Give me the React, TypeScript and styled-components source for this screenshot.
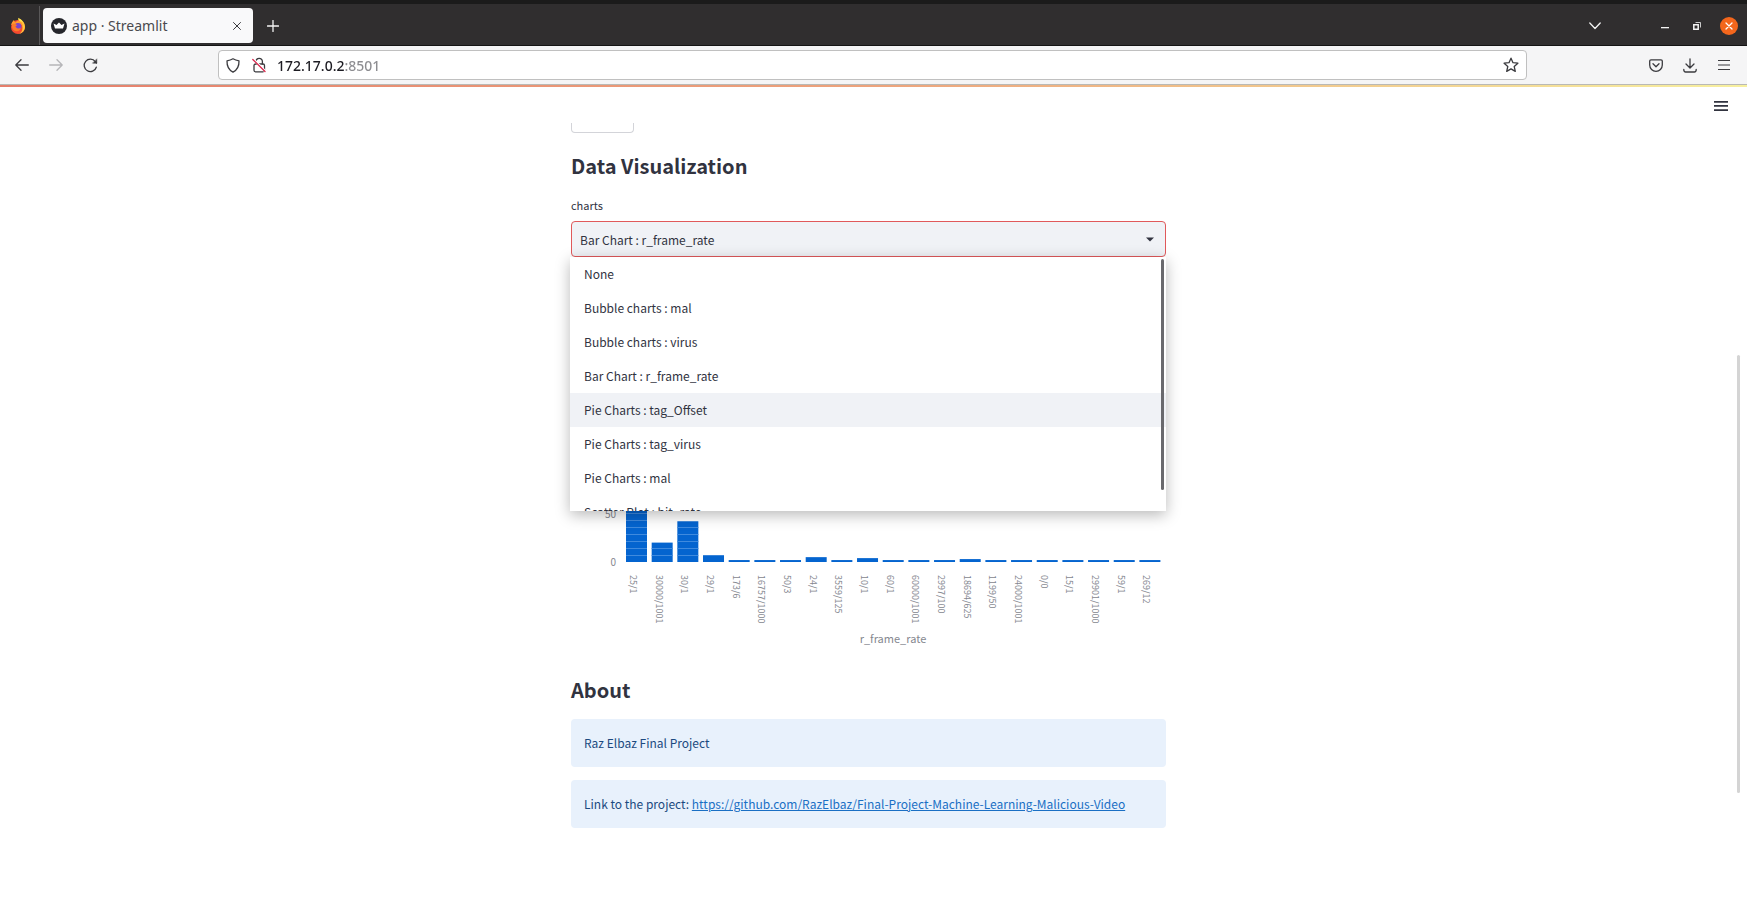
import React, { useState } from "react";
import styled, { createGlobalStyle } from "styled-components";

const sans = `"Noto Sans CJK SC", "Noto Sans", sans-serif`;
const chrome = `"Noto Sans", "Open Sans", sans-serif`;

const GlobalStyle = createGlobalStyle`
  * { box-sizing: border-box; }
  body { margin: 0; background: #ffffff; color: #31333f; font-family: ${sans}; }
  button { font: inherit; }
`;

const Window = styled.div`
  display: flex;
  flex-direction: column;
  height: 100vh;
  overflow: hidden;
`;

const TabStrip = styled.header`
  display: flex;
  align-items: center;
  flex: none;
  height: 46px;
  padding: 2px 9px 0 0;
  border-top: 4px solid #1b1b1b;
  border-bottom: 1px solid #141414;
  background: #302e2f;
  color: #f4f4f4;
  font-family: ${chrome};
`;

const PinnedTab = styled.div`
  display: flex;
  align-items: center;
  align-self: stretch;
  width: 40px;
  padding-left: 9px;
  border-right: 1px solid #5a5859;
`;

const Tab = styled.div`
  display: flex;
  align-items: center;
  gap: 5px;
  width: 210px;
  height: 35px;
  margin-left: 3px;
  padding: 0 8px;
  border-radius: 4px;
  background: #f9f9fa;
  color: #4a4a4e;
  font-size: 14px;
`;

const TabTitle = styled.span`
  flex: 1;
  white-space: nowrap;
`;

const IconButton = styled.button<{ $size?: number; $color?: string }>`
  display: flex;
  align-items: center;
  justify-content: center;
  flex: none;
  width: ${(p) => p.$size ?? 24}px;
  height: ${(p) => p.$size ?? 24}px;
  padding: 0;
  border: 0;
  border-radius: 50%;
  background: none;
  color: ${(p) => p.$color ?? "#3b3b3f"};
`;

const CloseWindow = styled(IconButton)`
  background: #f3661c;
`;

const NewTab = styled(IconButton)`
  margin-left: 8px;
`;

const WindowControls = styled.div`
  display: flex;
  align-items: center;
  gap: 14px;
  margin-left: auto;
`;

const ListTabs = styled(IconButton)`
  margin-right: 35px;
`;

const Toolbar = styled.nav`
  display: flex;
  align-items: center;
  flex: none;
  height: 39px;
  padding: 0 11px 0 10px;
  border-bottom: 1px solid #b9b9b5;
  background: #f5f5f6;
  font-family: ${chrome};
`;

const NavButtons = styled.div`
  display: flex;
  gap: 10px;
  width: 208px;
`;

const AddressBar = styled.div`
  display: flex;
  align-items: center;
  gap: 2px;
  flex: 1;
  height: 30px;
  padding: 0 3px 0 2px;
  border: 1px solid #c0c0c0;
  border-radius: 4px;
  background: #ffffff;
`;

const Address = styled.input`
  flex: 1;
  min-width: 0;
  height: 24px;
  padding: 0 0 0 4px;
  border: 0;
  outline: 0;
  background: linear-gradient(90deg, #1c1b22 72px, #8c8c90 72px);
  background-clip: text;
  color: transparent;
  font: 500 14px ${chrome};
`;

const ToolButtons = styled.div`
  display: flex;
  gap: 10px;
  width: 209px;
  justify-content: flex-end;
`;

const Decoration = styled.div`
  flex: none;
  height: 2px;
  background: linear-gradient(90deg, #e57f6c, #eda37c 50%, #f7f09f);
`;

const Page = styled.div`
  position: relative;
  flex: 1;
  min-height: 0;
  overflow: hidden;
`;

const MenuButton = styled(IconButton)`
  position: absolute;
  top: 7px;
  right: 14px;
`;

const ScrollThumb = styled.div`
  position: absolute;
  top: 33%;
  right: 7px;
  width: 3px;
  height: 54%;
  border-radius: 2px;
  background: #d4d4d4;
`;

const Scroller = styled.div`
  height: 100%;
  padding: 36px 10px 0 0;
`;

const Column = styled.main`
  display: flex;
  flex-direction: column;
  width: 595px;
  max-width: calc(100% - 32px);
  margin: 0 auto;
`;

const ClippedButton = styled.button`
  width: 63px;
  height: 10px;
  margin-bottom: 17px;
  border: 1px solid #d3d4d9;
  border-top: 0;
  border-radius: 0 0 4px 4px;
  background: #ffffff;
`;

const Heading = styled.h2`
  margin: 0;
  font-size: 20px;
  line-height: 32px;
  font-weight: 600;
`;

const Field = styled.div`
  position: relative;
  display: flex;
  flex-direction: column;
  gap: 7px;
  margin-top: 14px;
`;

const Label = styled.label`
  font-size: 11px;
  line-height: 18px;
`;

const SelectBox = styled.div`
  position: relative;
  display: flex;
`;

const Select = styled.select`
  flex: 1;
  height: 36px;
  padding: 0 8px;
  appearance: none;
  border: 1px solid #e0595b;
  border-radius: 4px;
  background: #f0f2f6;
  color: #31333f;
  font: 12px ${sans};
`;

const Caret = styled.svg`
  position: absolute;
  top: 16px;
  right: 12px;
  pointer-events: none;
`;

const Menu = styled.ul`
  position: absolute;
  z-index: 2;
  top: 100%;
  left: -1px;
  right: 0;
  height: 254px;
  margin: 0;
  padding: 0;
  overflow: hidden;
  list-style: none;
  background: #ffffff;
  box-shadow: 0 4px 14px rgba(0, 0, 0, 0.28);
`;

const Option = styled.li<{ $active: boolean }>`
  height: 34px;
  padding: 0 14px;
  background: ${(p) => (p.$active ? "#f0f2f6" : "#ffffff")};
  font-size: 12px;
  line-height: 34px;
`;

const MenuThumb = styled.li`
  position: absolute;
  top: 2px;
  right: 2px;
  width: 3px;
  height: 231px;
  border-radius: 2px;
  background: #69696d;
`;

const Chart = styled.svg`
  display: block;
  width: 100%;
  height: auto;
  margin-top: 20px;
  font-family: ${sans};
  fill: #85878f;
`;

const About = styled.section`
  display: flex;
  flex-direction: column;
  gap: 13px;
  margin-top: 19px;
`;

const Info = styled.div`
  padding: 12px 13px;
  border-radius: 4px;
  background: #e8f1fc;
  color: #1b4a80;
  font-size: 12px;
  line-height: 24px;
`;

const Link = styled.a`
  color: #1a6fc4;
  text-decoration: underline;
`;

const options = [
  "None",
  "Bubble charts : mal",
  "Bubble charts : virus",
  "Bar Chart : r_frame_rate",
  "Pie Charts : tag_Offset",
  "Pie Charts : tag_virus",
  "Pie Charts : mal",
  "Scatter Plot : bit_rate",
];

const bars: [string, number][] = [
  ["25/1", 200], ["30000/1001", 20], ["30/1", 42], ["29/1", 7], ["173/6", 2],
  ["16757/1000", 2], ["50/3", 2], ["24/1", 5], ["3559/125", 2], ["10/1", 4],
  ["60/1", 2], ["60000/1001", 2], ["2997/100", 2], ["18694/625", 3], ["1199/50", 2],
  ["24000/1001", 2], ["0/0", 2], ["15/1", 2], ["29901/1000", 2], ["59/1", 2], ["269/12", 2],
];

const BASE = 285;
const PITCH = 25.67;

function BarChart() {
  return (
    <Chart viewBox="0 0 595 378" role="img" aria-label="Bar chart of r_frame_rate">
      <text x="45" y="241" fontSize="10" textAnchor="end">50</text>
      <text x="45" y="289" fontSize="10" textAnchor="end">0</text>
      {bars.map(([name, value], i) => {
        const x = 55 + i * PITCH;
        const h = value * 0.97;
        const lines = Math.floor(h / 7);
        return (
          <g key={name}>
            <rect x={x} y={BASE - h} width="21" height={h} fill="#0464cf" />
            {Array.from({ length: lines }, (_, n) => (
              <rect key={n} x={x} y={BASE - 7 * (n + 1)} width="21" height="1" fill="#3f8ade" />
            ))}
            <text fontSize="9" transform={`translate(${x + 4} 298) rotate(90)`}>{name}</text>
          </g>
        );
      })}
      <text x="322" y="366" fontSize="11" textAnchor="middle">r_frame_rate</text>
    </Chart>
  );
}

const stroke = { fill: "none", stroke: "currentColor", strokeWidth: 1.3, strokeLinecap: "round", strokeLinejoin: "round" } as const;

function Firefox() {
  return (
    <svg width="18" height="18" viewBox="0 0 18 18" aria-hidden="true">
      <circle cx="9" cy="10" r="7" fill="#f5492f" />
      <path d="M9 1.500c4 1 7 4 7 8.500a7 7 0 0 1-6 6.900c4-2 4.500-7 2-10.400C11 5 9.500 4 9 1.500z" fill="#ffc83a" />
      <path d="M2.200 8C2.500 5.500 4 4 5 3l1 2.500L9 3.500c3 .5 5 3 5 6C12 7 9 6 6 7.500z" fill="#ff9a2e" />
      <path d="M9 .8c2 1 3.500 1.500 5 4.200L10.500 4z" fill="#ffe14d" />
      <circle cx="9" cy="9.500" r="3.400" fill="#7a45c9" />
      <path d="M3.200 7c2-.6 4-.2 5 1.500-2 0-2 1-1 2 1 1.600 3.500 1 4.500 0 0 3-3 4.500-5.500 3.500C3.500 13 2.400 9.800 3.200 7z" fill="#fb7a2a" />
    </svg>
  );
}

export default function App() {
  const [value, setValue] = useState(options[3]);
  return (
    <Window>
      <GlobalStyle />
      <TabStrip>
        <PinnedTab><Firefox /></PinnedTab>
        <Tab>
          <svg width="16" height="16" viewBox="0 0 16 16" aria-hidden="true">
            <circle cx="8" cy="8" r="8" fill="#26272c" />
            <path d="M2.500 5.500 5.500 7 8 4.500 10.500 7l3-1.500L12 10.500H4z" fill="#fff" />
          </svg>
          <TabTitle>app · Streamlit</TabTitle>
          <IconButton $size={16} aria-label="Close tab">
            <svg width="8" height="8" viewBox="0 0 8 8" {...stroke} strokeWidth={1}><path d="M.5.5l7 7M7.500.5l-7 7" /></svg>
          </IconButton>
        </Tab>
        <NewTab $color="#f4f4f4" aria-label="New tab">
          <svg width="12" height="12" viewBox="0 0 12 12" {...stroke}><path d="M6 .5v11M.5 6h11" /></svg>
        </NewTab>
        <WindowControls>
          <ListTabs $color="#f4f4f4" aria-label="List all tabs">
            <svg width="12" height="8" viewBox="0 0 12 8" {...stroke}><path d="M.8 1 6 6.500 11.200 1" /></svg>
          </ListTabs>
          <IconButton $size={18} $color="#f4f4f4" aria-label="Minimize">
            <svg width="8" height="8" viewBox="0 0 8 8" fill="currentColor"><path d="M0 5h8v1.300H0z" /></svg>
          </IconButton>
          <IconButton $size={18} $color="#f4f4f4" aria-label="Restore">
            <svg width="8" height="8" viewBox="0 0 8 8" fill="none" stroke="currentColor"><path d="M.8 2.800h4.400v4.400H.8z" strokeWidth="1.500" /><path d="M2.500.5h5v5" strokeWidth=".8" /></svg>
          </IconButton>
          <CloseWindow $size={18} $color="#fff" aria-label="Close window">
            <svg width="8" height="8" viewBox="0 0 8 8" {...stroke}><path d="M1 1l6 6M7 1 1 7" /></svg>
          </CloseWindow>
        </WindowControls>
      </TabStrip>
      <Toolbar>
        <NavButtons>
          <IconButton aria-label="Back"><svg width="14" height="12" viewBox="0 0 14 12" {...stroke}><path d="M13.300 6H.8M6 .8.8 6 6 11.200" /></svg></IconButton>
          <IconButton $color="#b5b5b8" aria-label="Forward"><svg width="14" height="12" viewBox="0 0 14 12" {...stroke}><path d="M.7 6h12.500M8 .8 13.200 6 8 11.200" /></svg></IconButton>
          <IconButton aria-label="Reload"><svg width="15" height="15" viewBox="0 0 15 15" {...stroke}><path d="M13.300 9.200A6.200 6.200 0 1 1 12.300 3.600L13.500 5" /><path d="M13.800 1.200v4h-4z" fill="currentColor" strokeWidth=".5" /></svg></IconButton>
        </NavButtons>
        <AddressBar>
          <IconButton aria-label="Tracking protection"><svg width="14" height="15" viewBox="0 0 14 15" {...stroke}><path d="M7 .8c2 1.200 3.800 1.700 6 2 .2 5-1.300 9-6 11.400C2.300 11.800.8 7.800 1 2.800c2.200-.3 4-.8 6-2z" /></svg></IconButton>
          <IconButton aria-label="Connection not secure"><svg width="14" height="16" viewBox="0 0 14 16" {...stroke}><rect x="2" y="7" width="10.500" height="7.800" rx="1.500" /><path d="M4 7V4.500a3.200 3.200 0 0 1 6.400 0V7" /><path d="M1 2l12.500 12.500" stroke="#ffffff" strokeWidth="2.600" /><path d="M.8 2.500 13 14.500" stroke="#d7264c" /></svg></IconButton>
          <Address aria-label="Address" defaultValue="172.17.0.2:8501" />
          <IconButton aria-label="Bookmark this page"><svg width="16" height="16" viewBox="0 0 16 16" {...stroke}><path d="M8 1.200 10 5.700l4.900.5-3.700 3.300 1.100 4.900L8 11.900l-4.300 2.500 1.100-4.900L1.100 6.200 6 5.700z" /></svg></IconButton>
        </AddressBar>
        <ToolButtons>
          <IconButton aria-label="Pocket"><svg width="14" height="13" viewBox="0 0 14 13" {...stroke}><path d="M2 .8h10c.8 0 1.300.5 1.300 1.200v4a6.300 6.300 0 0 1-12.600 0V2C.7 1.300 1.200.8 2 .8z" /><path d="M4 4.800 7 7.700l3-2.900" /></svg></IconButton>
          <IconButton aria-label="Downloads"><svg width="14" height="15" viewBox="0 0 14 15" {...stroke}><path d="M7 .8v9M3 6l4 4 4-4M.8 11.500c0 1.800.5 2.500 1.800 2.500h8.800c1.300 0 1.800-.7 1.800-2.500" /></svg></IconButton>
          <IconButton aria-label="Application menu"><svg width="12" height="12" viewBox="0 0 12 12" {...stroke} strokeWidth={1.200}><path d="M.5 1.500h11M.5 6h11M.5 10.500h11" /></svg></IconButton>
        </ToolButtons>
      </Toolbar>
      <Decoration />
      <Page>
        <MenuButton aria-label="Main menu">
          <svg width="14" height="10" viewBox="0 0 14 10" fill="#31333f"><path d="M0 0h14v1.700H0zM0 4.100h14v1.700H0zM0 8.200h14v1.700H0z" /></svg>
        </MenuButton>
        <ScrollThumb />
        <Scroller>
          <Column>
            <ClippedButton aria-label="Submit" />
            <Heading>Data Visualization</Heading>
            <Field>
              <Label htmlFor="charts">charts</Label>
              <SelectBox>
                <Select id="charts" value={value} onChange={(e) => setValue(e.target.value)}>
                  {options.map((o) => <option key={o}>{o}</option>)}
                </Select>
                <Caret width="8" height="5" viewBox="0 0 8 5" fill="#31333f"><path d="M0 .5h8L4 4.500z" /></Caret>
              </SelectBox>
              <Menu>
                {options.map((o) => <Option key={o} $active={o === "Pie Charts : tag_Offset"}>{o}</Option>)}
                <MenuThumb aria-hidden="true" />
              </Menu>
            </Field>
            <BarChart />
            <About>
              <Heading>About</Heading>
              <Info>Raz Elbaz Final Project</Info>
              <Info>Link to the project: <Link href="https://github.com/RazElbaz/Final-Project-Machine-Learning-Malicious-Video">https://github.com/RazElbaz/Final-Project-Machine-Learning-Malicious-Video</Link></Info>
            </About>
          </Column>
        </Scroller>
      </Page>
    </Window>
  );
}
